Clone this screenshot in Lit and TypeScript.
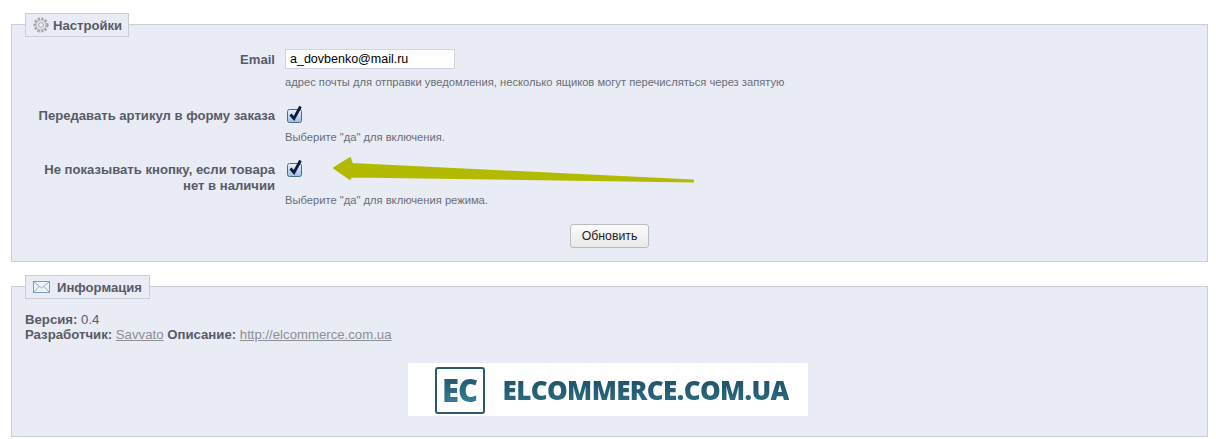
import { LitElement, html, css } from "lit";
import { customElement } from "lit/decorators.js";

@customElement("app-root")
export class AppRoot extends LitElement {
  static styles = css`
    :host { display: block; width: 1216px; height: 439px; overflow: hidden; background: #fff; font-family: "Liberation Sans", Arial, sans-serif; font-size: 11px; color: #585a69; }
    .page { position: relative; display: flex; flex-direction: column; gap: 24px; padding: 24px 8px 0 11px; }
    .panel { position: relative; box-sizing: border-box; border: 1px solid #ccced7; background: #e9ecf4; }
    .settings { height: 238px; padding: 24px 0 0; }
    .info { height: 151px; padding: 25px 13px 0; }
    .legend { position: absolute; left: 13px; top: -12px; box-sizing: border-box; height: 24px; display: flex; align-items: center; gap: 4px; padding: 0 7px; border: 1px solid #ccced7; background: #e9ecf4; font-weight: 700; font-size: 13.1px; color: #585a69; }
    .legend svg { flex-shrink: 0; }
    .settings .legend { width: 104px; }
    .info .legend { width: 125px; gap: 6px; }
    .row { display: grid; grid-template-columns: 263px 1fr; column-gap: 10px; }
    .label { box-sizing: border-box; padding-left: 20px; text-align: right; font-weight: 700; font-size: 13.1px; line-height: 16px; color: #585a69; }
    .email { padding-top: 3px; }
    .field { min-width: 0; }
    input.text { display: block; box-sizing: border-box; width: 170px; height: 20px; padding: 0 4px; border: 1px solid #d0d3d8; background: #fff; font: 12.5px "Liberation Sans", Arial, sans-serif; color: #000; outline: none; }
    .hint { font-size: 11.18px; line-height: 14px; color: #6a6c78; }
    .r1 { height: 56px; }
    .r2 { height: 54px; }
    .r3 { height: 65px; }
    .r1 .hint { margin-top: 6px; }
    .r2 .hint { margin-top: 7px; }
    .r3 .hint { margin-top: 16px; }
    .r2 .label, .r3 .label { padding-top: 3px; }
    .check { display: block; width: 16px; height: 18px; margin: 0 0 0 2px; }
    .actions { display: flex; justify-content: center; }
    button { box-sizing: border-box; width: 79px; height: 24px; padding: 0; border: 1px solid #b9bbc2; border-radius: 3px; background: linear-gradient(#fbfbfb, #e9e9e9); font: 12.3px "Liberation Sans", Arial, sans-serif; color: #222; }
    .meta { font-size: 13.2px; line-height: 15px; color: #585a69; }
    .meta b { font-weight: 700; }
    .meta a { color: #8e8e93; text-decoration: underline; }
    .logo-wrap { display: flex; justify-content: center; margin-top: 21px; padding-right: 4px; }
    .logo { box-sizing: border-box; width: 400px; height: 53px; background: #fff; display: flex; align-items: center; gap: 18px; padding: 1px 0 0 27px; }
    .mark { box-sizing: border-box; width: 50px; height: 47px; border: 2px solid #2c5a6e; border-radius: 3px; display: flex; align-items: center; justify-content: center; font-family: "Open Sans", sans-serif; font-weight: 800; font-size: 31px; letter-spacing: -1px; color: transparent; background: linear-gradient(#1f4c61, #3c8aa3); -webkit-background-clip: text; background-clip: text; }
    .brand { font-family: "Open Sans", sans-serif; font-weight: 800; font-size: 26px; letter-spacing: -0.6px; color: transparent; background: linear-gradient(#1d4a60, #2d7188); -webkit-background-clip: text; background-clip: text; white-space: nowrap; }
    .arrow { position: absolute; left: 320px; top: 150px; width: 390px; height: 40px; pointer-events: none; }
  `;

  private checkbox() {
    return html`<svg class="check" viewBox="0 0 16 18">
      <defs><linearGradient id="cb" x1="0" y1="0" x2="0" y2="1"><stop offset="0" stop-color="#eef4fb"/><stop offset="1" stop-color="#9dbbe3"/></linearGradient></defs>
      <rect x="0.5" y="4.5" width="14" height="13" rx="2" fill="url(#cb)" stroke="#4a6a92"/>
      <path d="M3.5 9.5 L7 13.5 L13.5 1.5" fill="none" stroke="#0c1c3c" stroke-width="2.8"/>
    </svg>`;
  }

  render() {
    return html`<div class="page">
      <section class="panel settings">
        <div class="legend">
          <svg width="16" height="16" viewBox="0 0 16 16">
            <circle cx="8" cy="8" r="6.2" fill="none" stroke="#a3a4a8" stroke-width="2.8" stroke-dasharray="2.2 1.4"/>
            <circle cx="8" cy="8" r="5" fill="none" stroke="#b9babd" stroke-width="1.2"/>
            <circle cx="8" cy="8" r="2.4" fill="#f3f3f3" stroke="#a3a4a8" stroke-width="1"/>
          </svg>
          <span>Настройки</span>
        </div>
        <div class="row r1">
          <div class="label email">Email</div>
          <div class="field">
            <input class="text" type="text" .value=${"a_dovbenko@mail.ru"} />
            <div class="hint">адрес почты для отправки уведомления, несколько ящиков могут перечисляться через запятую</div>
          </div>
        </div>
        <div class="row r2">
          <div class="label">Передавать артикул в форму заказа</div>
          <div class="field">${this.checkbox()}<div class="hint">Выберите "да" для включения.</div></div>
        </div>
        <div class="row r3">
          <div class="label">Не показывать кнопку, если товара нет в наличии</div>
          <div class="field">${this.checkbox()}<div class="hint">Выберите "да" для включения режима.</div></div>
        </div>
        <div class="actions"><button>Обновить</button></div>
      </section>
      <section class="panel info">
        <div class="legend">
          <svg width="18" height="14" viewBox="0 0 18 14">
            <rect x="0.5" y="1.5" width="16" height="11" fill="#eef3fa" stroke="#7d9cc4"/>
            <path d="M1 2 L8.5 8 L16 2 M1 12 L6 6.5 M16 12 L11 6.5" fill="none" stroke="#8fabd0"/>
          </svg>
          <span>Информация</span>
        </div>
        <div class="meta">
          <div><b>Версия:</b> 0.4</div>
          <div><b>Разработчик:</b> <a href="#">Savvato</a> <b>Описание:</b> <a href="#">http://elcommerce.com.ua</a></div>
        </div>
        <div class="logo-wrap">
          <div class="logo">
            <div class="mark">EC</div>
            <div class="brand">ELCOMMERCE.COM.UA</div>
          </div>
        </div>
      </section>
      <svg class="arrow" viewBox="0 0 390 40">
        <path d="M14 18 L30 8 L32 14 L373 30.5 L373 31.5 L31 26.5 L30 29 Z" fill="#b2bb00" stroke="#b2bb00" stroke-width="2" stroke-linejoin="round"/>
      </svg>
    </div>`;
  }
}
